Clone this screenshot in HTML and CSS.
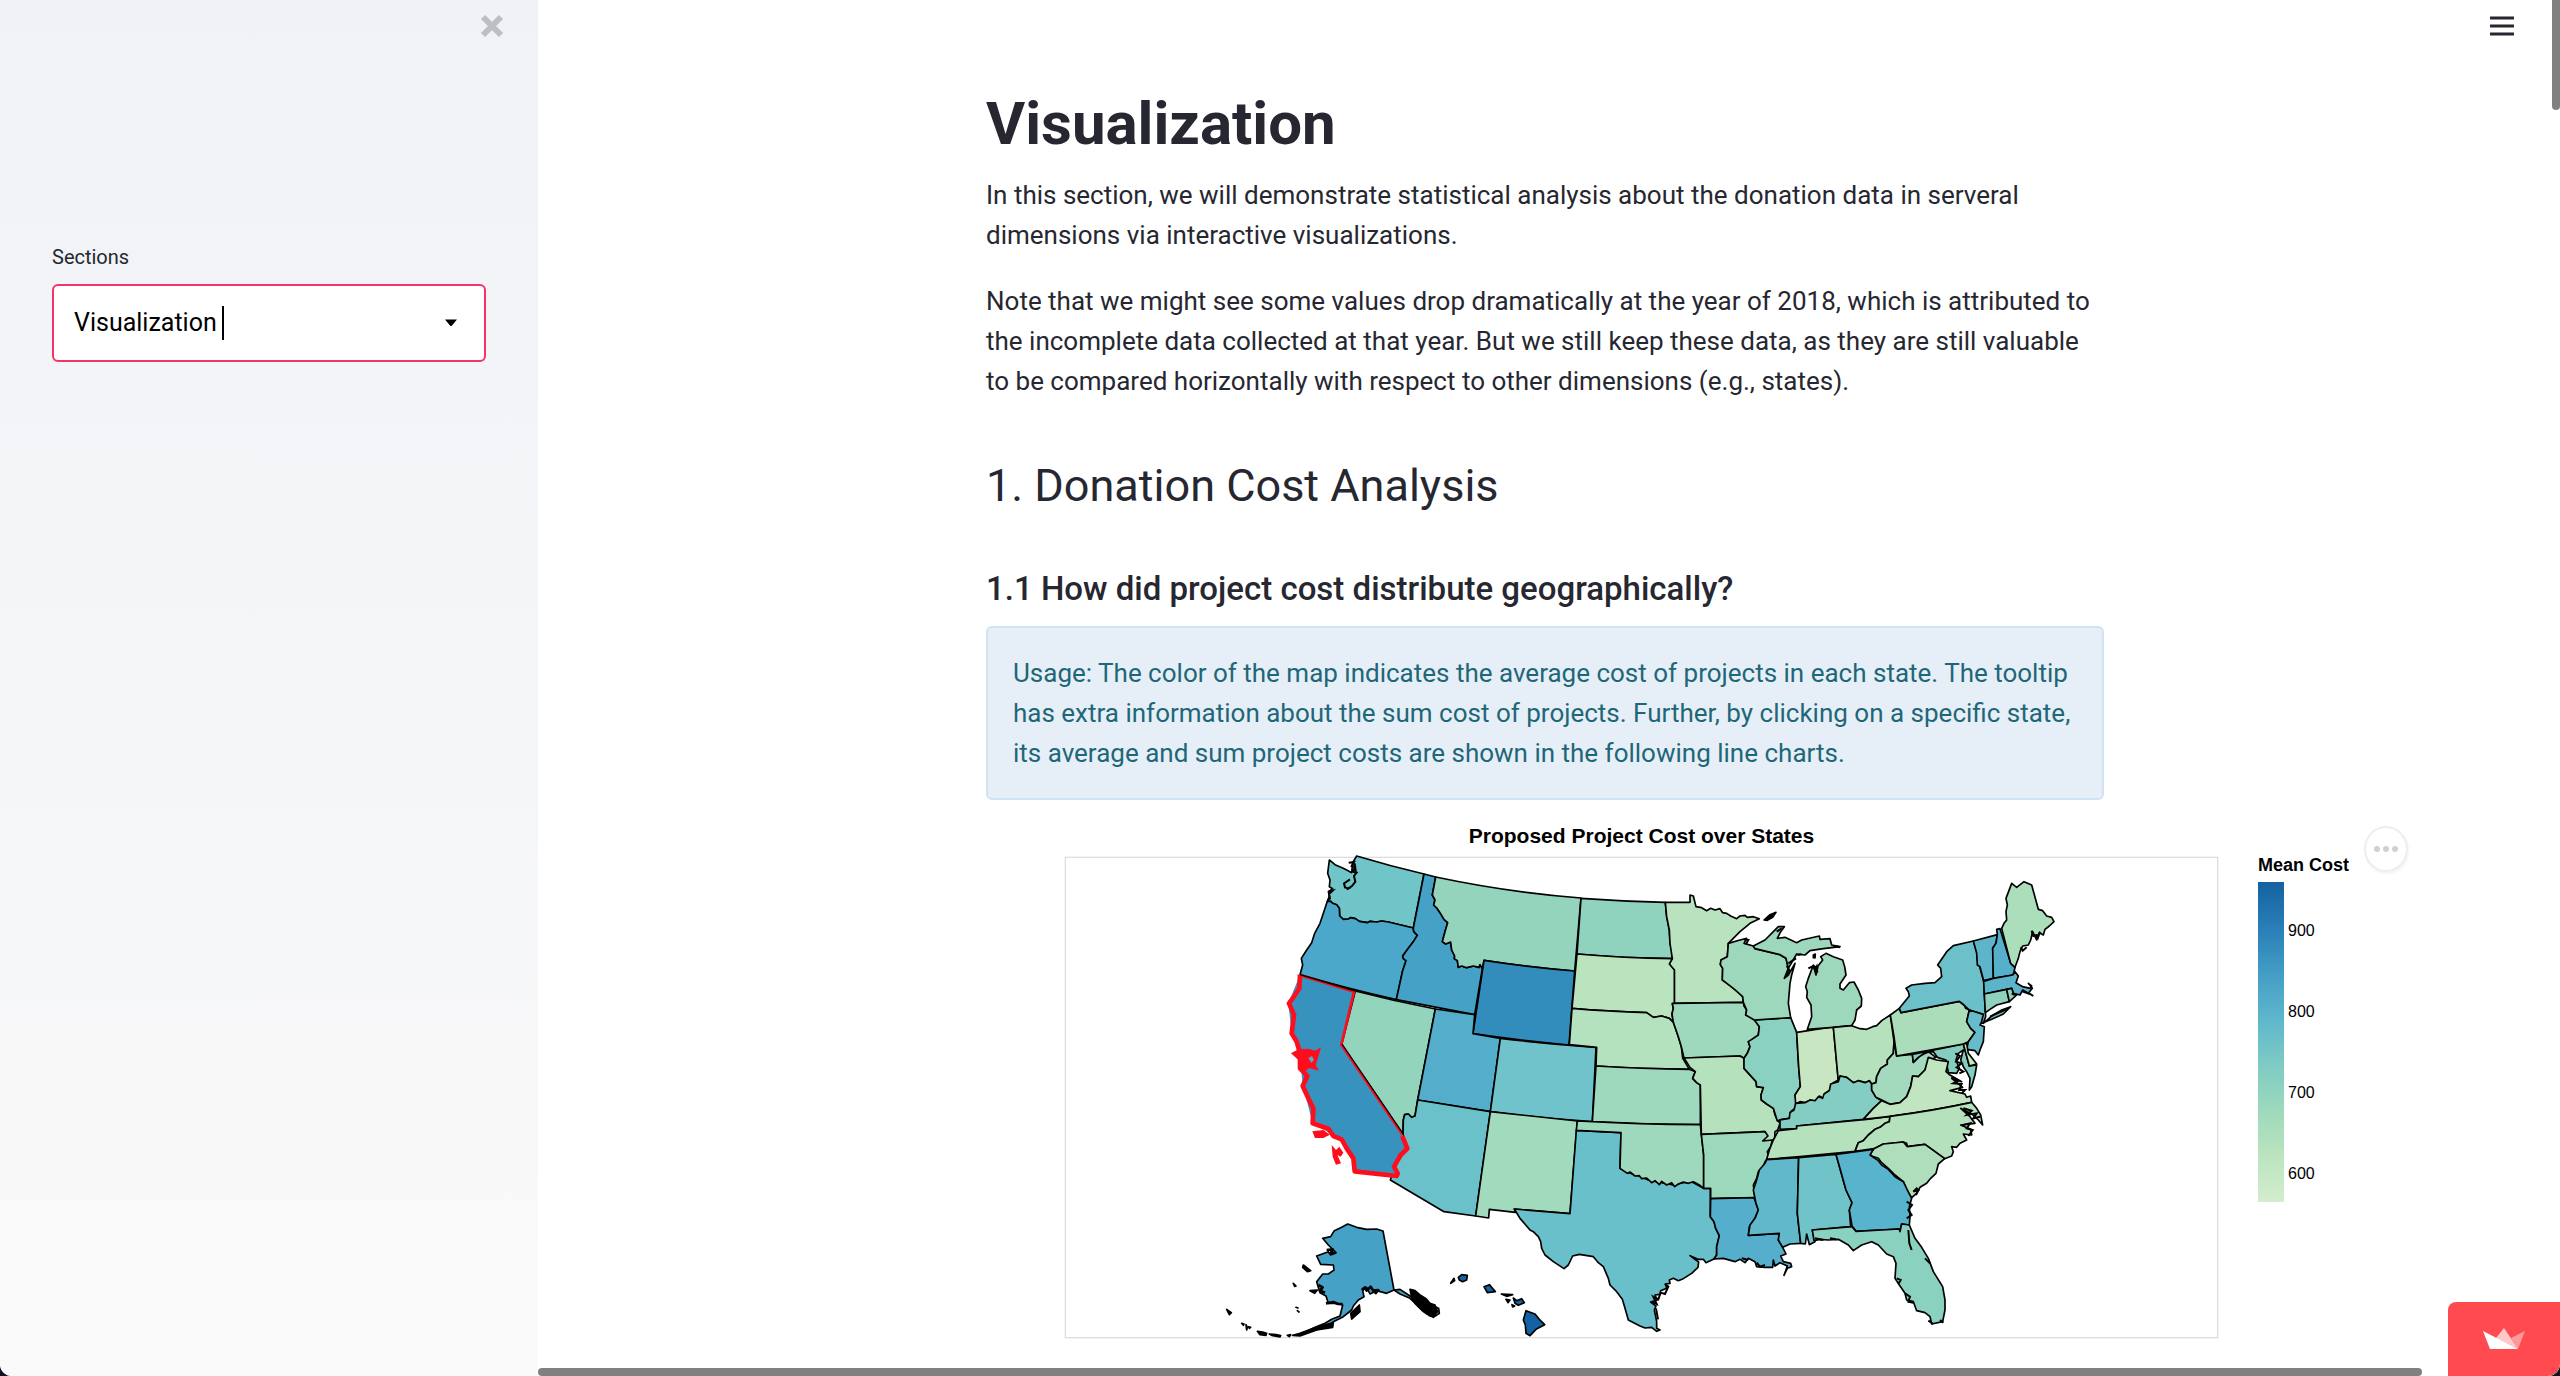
FILE: index.html
```html
<!DOCTYPE html>
<html lang="en">
<head>
<meta charset="utf-8">
<meta name="viewport" content="width=device-width, initial-scale=1">
<title>Visualization</title>
<link rel="stylesheet" href="styles.css">
</head>
<body>
<div class="app">
  <aside class="sidebar">
    <button class="close" type="button" aria-label="Close sidebar">
      <svg viewBox="0 0 24 24" width="24" height="24"><path d="M3 3L21 21M21 3L3 21" fill="none" stroke="#bdbec3" stroke-width="6"/></svg>
    </button>
    <div class="field">
      <label for="section">Sections</label>
      <div class="combo">
        <input id="section" type="text" role="combobox" aria-expanded="false" value="Visualization">
        <span class="caret"></span>
        <svg class="arrow" viewBox="0 0 12 8" width="12" height="8"><path d="M0 0.500H12L7 6.500Q6 7.500 5 6.500Z"/></svg>
      </div>
    </div>
  </aside>

  <main class="main">
    <button class="menu" type="button" aria-label="Menu">
      <svg viewBox="0 0 24 20" width="24" height="20"><path d="M0 2H24M0 10H24M0 18H24" stroke="#262730" stroke-width="3"/></svg>
    </button>
    <article class="content">
      <h1>Visualization</h1>
      <p>In this section, we will demonstrate statistical analysis about the donation data in serveral<br>dimensions via interactive visualizations.</p>
      <p>Note that we might see some values drop dramatically at the year of 2018, which is attributed to<br>the incomplete data collected at that year. But we still keep these data, as they are still valuable<br>to be compared horizontally with respect to other dimensions (e.g., states).</p>
      <h2>1. Donation Cost Analysis</h2>
      <h3>1.1 How did project cost distribute geographically?</h3>
      <div class="info">Usage: The color of the map indicates the average cost of projects in each state. The tooltip<br>has extra information about the sum cost of projects. Further, by clicking on a specific state,<br>its average and sum project costs are shown in the following line charts.</div>

      <figure class="chart">
        <div class="plot">
          <figcaption>Proposed Project Cost over States</figcaption>
          <svg class="map" viewBox="0 0 3459 1443" role="img" aria-label="Mean project cost by state">
            <rect class="frame" x="1" y="1" width="3457" height="1441"/>
            <!-- West -->
            <g class="states" transform="translate(645 -51)">
              <path fill="#70c5c8" d="M148 60L158 68L165 74L188 84L200 90L215 98L218 68L230 48Q330 78 432 102L400 264L325 246L305 243L290 246L270 244L262 248L238 244L226 236L212 233L205 237L190 238L179 228L178 205L170 194L158 190L152 184L142 184L148 168L145 155L158 146L148 140L150 120L143 100Z"/>
              <path fill="#4ba8ca" d="M142 184L152 184L158 190L170 194L178 205L179 228L190 238L205 237L212 233L226 236L238 244L262 248L270 244L290 246L305 243L325 246L400 264L401 274L412 286L402 302L385 325L368 348L370 356L378 362L368 392L349 479Q200 446 60 404L68 375L64 355L80 330L95 308L104 280L120 250L130 220Z"/>
              <path fill="#45a1c6" d="M432 102L467 111L457 165L465 180L461 195L472 206L480 218L492 238L503 248L495 275L487 305L497 312L512 306L515 330L524 348L523 356L532 362L535 382L545 378L560 383L580 378L597 382L600 374L607 386L584 524L349 479L368 392L378 362L370 356L368 348L385 325L402 302L412 286L401 274L400 264Z"/>
              <path fill="#94d4bc" d="M467 111Q690 158 903 174L884 393Q750 382 612 361L607 386L600 374L597 382L580 378L560 383L545 378L535 382L532 362L523 356L524 348L515 330L512 306L497 312L487 305L495 275L503 248L492 238L480 218L472 206L461 195L465 180L457 165Z"/>
              <path fill="#328dbd" d="M612 361Q750 382 884 393L867 615Q720 602 579 581Z"/>
              <path fill="#92d5bc" d="M226 453Q345 484 466 507L413 780L405 828L395 832L385 822L374 824L370 840L369 885L185 614Z"/>
              <path fill="#53adcb" d="M466 507L584 524L579 581L661 595L631 815L413 780Z"/>
              <path fill="#70c3ca" d="M661 595Q800 612 948 622L937 845Q780 836 631 815Z"/>
              <path fill="#6ac1c9" d="M413 780L631 815L587 1128L492 1115L331 1020L335 1008L352 1000L345 975L360 945L382 925L369 885L370 840L374 824L385 822L395 832L405 828Z"/>
              <path fill="#a1dabd" d="M631 815L892 843L870 1121L703 1107L706 1117L628 1108L626 1134L587 1128Z"/>
            </g>
            <!-- Center -->
            <g class="states" transform="translate(1425 9)">
              <path fill="#8fd2be" d="M123 115Q250 124 376 127L380 170L388 210L390 250L397 275L397 296Q250 294 111 282Z"/>
              <path fill="#b9e3be" d="M376 127H450V105L460 108L468 140L485 143L500 152L512 145L525 150L540 146L548 158L560 160L572 168L590 176L600 168L615 166L622 172L640 170L658 176L630 190L600 215L565 250L562 290L543 300L541 314L548 325L547 360L565 368L580 385L600 398L608 410L610 427L403 430V330L390 318L388 310L397 296L390 250L388 210L380 170Z"/>
              <path fill="#b9e4be" d="M111 282Q250 294 397 296L388 312L403 330V430L397 432L400 445L396 462L400 487L388 475L365 468L340 472L320 458Q200 454 96 445Z"/>
              <path fill="#b4e2be" d="M96 445Q200 454 320 458L340 472L365 468L388 475L400 487L415 530L424 560L428 594L448 628Q300 626 168 618L170 562L88 554Z"/>
              <path fill="#9ed9bd" d="M168 618Q300 626 448 628L466 635L458 655L470 668L481 675V794Q320 794 157 785Z"/>
              <path fill="#69bfca" d="M109 811L243 818L240 925L265 938L290 945L325 960L365 968L400 975L430 968L455 965L491 985L511 985V1070L522 1085L527 1105L538 1127L530 1160L530 1185L522 1197L498 1208L490 1198L474 1198L450 1187L476 1206L474 1222L455 1240L430 1256L415 1262L400 1255L388 1260L390 1270L376 1272L380 1285L362 1292L360 1303L345 1305L352 1320L332 1326L348 1338L343 1350L350 1385L350 1405L360 1410L350 1414L335 1402L315 1404L300 1398L265 1380L255 1345L247 1318L230 1295L210 1275L205 1255L190 1220L175 1208L160 1190L118 1183L98 1188L85 1215L72 1226L40 1205L15 1185L5 1165L2 1145L-5 1130L-20 1115L-30 1110L-60 1075L-77 1047L90 1061Z"/>
              <path fill="#9ed9bd" d="M112 783Q300 794 481 794L484 823L491 885V985L478 975L460 965L445 970L430 966L415 972L404 980L395 968L380 975L365 964L358 974L345 962L335 968L320 954L305 956L298 947L285 948L270 936L262 940L240 925L243 818L109 811Z"/>
              <path fill="#9fd9bd" d="M397 430L610 427L612 438L620 450L617 465L630 470L645 480L658 500L655 525L640 540L625 545L630 560L622 580L612 595L600 588L432 594L424 560L415 530L400 487L396 462L400 445Z"/>
              <path fill="#b5e2bd" d="M432 594L600 588L612 595L612 625L630 645L648 665L650 680L670 683L663 705L664 720L680 732L700 745L705 765L712 780L720 790L713 810L705 815L704 835L697 843L668 843L680 828L675 815L484 823L481 675L470 668L458 655L466 635L450 622Z"/>
              <path fill="#9cd8bc" d="M484 823L675 815L684 828L668 843L697 840L692 860L682 875L686 890L675 905L668 925L655 935L650 955L640 975L645 1013L512 1016V985H491V885Z"/>
              <path fill="#8bd1c1" d="M643 480L752 473L770 517L776 620L781 680L765 705L770 725L765 745L752 755L748 775L725 778L712 783L700 745L680 732L664 720L663 705L670 683L650 680L648 665L612 625L612 595L622 580L630 560L625 545L655 525L658 500Z"/>
              <path fill="#c8e6c2" d="M770 517L790 514L880 500L895 660L880 668L870 690L855 700L850 715L838 708L825 725L812 720L795 728L780 725L767 732L765 705L781 680L776 620Z"/>
              <path fill="#9ed8bc" d="M565 250L600 240L620 235L612 250L640 258L645 266L720 284L738 295L745 325L733 355L745 345L765 310L755 345L750 370L745 430L752 473L643 480L617 465L620 450L610 427L608 410L580 385L547 360L548 325L541 314L543 300L562 290Z"/>
              <path fill="#9dd8bc" d="M640 258L675 240L700 215L715 200L733 200L722 215L712 235L735 232L770 248L785 240L838 228L840 238L870 236L875 255L900 260L850 266L810 272L795 285L770 282L745 325L738 295L720 284L645 266Z"/>
              <path fill="#000" d="M672 180L690 164L708 157L698 172L682 181ZM820 285L826 282L825 294L820 293Z"/>
            </g>
            <!-- East -->
            <g class="states" transform="translate(2205 9)">
              <path fill="#9dd8bc" d="M22 508L35 470L33 435L20 412L22 395L17 380L25 355L40 315L48 345L54 318L68 300L62 290L78 280L100 290L128 300L134 320L138 345L120 372L120 385L130 390L148 368L162 366L175 390L185 415L184 438L170 450L165 480L155 497L100 502Z"/>
              <path fill="#b5e1bc" d="M100 502L155 497L180 506L200 508L218 500L230 497L245 482L271 465L282 545L280 580L262 600L262 612L242 625L230 650L228 668L215 672L208 662L195 668L175 662L160 668L140 652L120 648L115 665Z"/>
              <path fill="#84cdc2" d="M-60 808L-10 806V798L190 778L220 745L245 722L228 712L215 690V672L208 662L195 668L175 662L160 668L140 652L120 648L115 665L92 672L88 692L72 702L68 715L55 710L45 722L30 720L15 728L-13 730L-18 750L-30 758L-32 775L-60 780Z"/>
              <path fill="#b5e2bd" d="M-65 812L-10 806V798L200 778L270 769L268 785L255 790L240 802L225 808L205 825L190 842L175 848L165 874L0 890L-100 898L-92 870L-80 840Z"/>
              <path fill="#a3d9bd" d="M282 545L290 588L337 583L340 607L360 588L385 575L408 592L385 602L375 630L355 650L338 648L332 680L320 710L300 728L270 733L250 722L228 712L215 690V672L228 668L230 650L242 625L262 612L262 600L280 580Z"/>
              <path fill="#84cdc0" d="M337 583L490 552L508 618L530 615L525 645L515 680L508 690L510 655L500 635L490 620L482 600L490 570L475 580L468 600L478 625L470 640L445 638L438 600L412 592L400 575L375 578L355 592L340 607Z"/>
              <path fill="#c0e5c0" d="M190 778L220 745L245 722L270 733L300 728L320 710L332 680L338 648L355 650L375 630L385 592L410 600L445 605L438 635L450 645L485 665L455 655L488 682L450 692L495 702L500 712L512 708L515 727Q400 752 270 769Z"/>
              <path fill="#b5e1bd" d="M270 769Q400 752 515 727L530 745L542 765L548 795L535 780L515 762L482 745L510 770L525 790L482 795L512 808L515 825L490 822L500 840L480 850L470 862L455 860L460 875L455 888L434 896L375 853L322 860L320 850L310 846L250 852L222 866L165 874L175 848L190 842L205 825L225 808L240 802L255 790L268 785Z"/>
              <path fill="#aedebc" d="M222 866L250 852L310 846L322 860L375 853L434 896L415 912L408 940L392 955L380 970L360 982L350 1000L335 1013L322 995L310 965L285 945L265 925L245 908L235 895L215 888L210 882Z"/>
              <path fill="#abddbb" d="M271 465L298 445L303 458L478 424L492 435L497 445L508 450L500 485L512 505L525 517L505 545L490 552L290 588L282 530Z"/>
              <path fill="#6bc0c9" d="M298 445L328 408L325 395L318 385L335 375L375 370L405 368L425 350L422 325L413 315L440 275L460 257L520 243L530 270L532 295L551 364L553 402L557 470L550 490L575 468L605 450L632 440L610 462L575 478L540 492L548 463L508 450L492 435L478 424L303 458Z"/>
              <path fill="#5eb5cb" d="M520 243L592 224L588 250L578 265L580 300L580 355L551 362L540 320L532 315L530 280Z"/>
              <path fill="#56b0cc" d="M592 224L590 208L600 206L632 310L645 322L640 345L580 355L578 265L588 250Z"/>
              <path fill="#abdebb" d="M605 205L612 190L620 180L618 155L622 135L618 115L635 70L650 82L672 65L695 75L715 148L728 152L740 168L755 172L762 185L748 198L735 208L730 225L718 218L710 240L698 215L692 240L685 255L668 258L660 275L655 295L645 322L632 310Z"/>
              <path fill="#5cb4cb" d="M551 364L580 355L638 345L645 335L655 348L648 368L668 380L690 385L695 378L685 370L697 385L685 400L668 390L660 405L640 400L635 385L553 402Z"/>
              <path fill="#8fd2be" d="M553 402L620 388L628 425L590 435L570 448L556 458Z"/>
              <path fill="#8fd2be" d="M620 388L635 385L640 400L650 405L628 425Z"/>
              <path fill="#66bccb" d="M508 450L550 463L545 485L540 495L553 500L550 545L540 570L535 585L525 572L500 568L505 545L525 517L512 505L500 485Z"/>
              <path fill="#c8e6c2" d="M490 552L500 550L505 580L530 612L508 618Z"/>
            </g>
            <!-- South -->
            <g class="states" transform="translate(1425 819)">
              <path fill="#55aecc" d="M512 206L642 203L648 220L655 240L645 265L628 290L625 316L718 310L715 330L728 352L738 372L722 378L730 395L752 400L755 410L742 415L732 436L742 408L720 398L705 408L700 390L698 412L675 412L650 410L645 395L625 385L615 398L600 388L585 395L550 385L522 387L530 375L530 350L538 317L527 295L522 275L511 260Z"/>
              <path fill="#62b8cb" d="M680 89L776 83L772 250L782 340L750 342L728 352L715 330L718 310L625 316L630 285L645 265L655 240L648 220L640 180L650 150L658 120L675 100Z"/>
              <path fill="#70c3c8" d="M776 83L888 73L918 180L936 218L928 240L932 290L817 300L825 335L808 344L800 312L796 342L782 340L772 250Z"/>
              <path fill="#58b3cc" d="M888 73L1000 58L990 75L1015 92L1025 105L1045 118L1065 140L1090 155L1102 180L1115 205L1108 230L1110 260L1108 285L1085 282L1080 303L1078 297L948 304L936 288L928 240L936 218L918 180Z"/>
              <path fill="#8ad1c0" d="M817 300L936 290L948 304L1078 297L1080 305L1085 282L1108 285L1125 325L1145 352L1165 385L1180 425L1208 470L1215 510V540L1208 575L1175 582L1170 560L1155 548L1130 542L1120 515L1100 510L1095 490L1078 465L1065 445L1068 400L1060 380L1040 372L1015 345L995 335L965 345L940 362L925 345L895 328L865 330L840 328L822 332Z"/>
            </g>
            <!-- Alaska and Hawaii -->
            <g class="states" transform="translate(405 939)">
              <path fill="#45a1c6" d="M549 183L582 360L560 370L530 362L510 372L500 352L488 362L492 380L475 390L460 408L455 420L430 440L400 455L385 470L335 482L300 495L345 472L375 460L395 448L420 438L428 405L405 400L385 400L378 378L360 368L350 335L368 312L385 312L402 300L400 285L362 283L350 258L385 245L392 255L408 248L385 225L368 205L392 200L403 182L425 172L443 162L470 172L500 178L530 177Z"/>
              <path fill="#45a1c6" d="M582 360L600 358L630 378L655 390L700 408L716 415L718 430L700 442L680 430L655 408L630 385L600 372Z"/>
              <path fill="#000" d="M630 358L645 362L660 375L678 386L690 400L705 405L712 425L700 440L690 438L670 425L645 400L636 388ZM478 405L480 425L455 447L452 430ZM310 285L332 302L322 305L308 292ZM80 418L94 428L88 434ZM125 460L132 462L130 466ZM138 464L142 472L140 480ZM146 470L152 472L148 475ZM172 484L188 486L200 490L198 496L180 494ZM208 492L228 494L242 497L240 501L215 496ZM280 340L288 348L284 349ZM262 496L272 494L268 500ZM278 496L300 490L340 475L400 458L398 472L350 480L300 498ZM330 362L352 360L344 370ZM288 412L294 414ZM292 422L297 426Z"/>
              <path fill="none" stroke-width="8" d="M485 360L495 352L500 362L512 350L520 362L535 360L525 372M380 240L398 238L392 250L408 248M355 345L368 352L360 362L375 368M378 400L400 396L415 402L428 402"/>
              <path fill="#1562a3" d="M775 322L785 314L802 316L800 330L788 335L778 330ZM852 350L868 344L886 365L862 368ZM940 384L950 392L965 386L973 398L955 406L945 400ZM978 422L1005 432L1018 448L1034 464L1008 478L990 497L978 490L976 465L970 450Z"/>
              <path fill="#000" d="M752 340L762 325L764 332ZM904 372L938 374L920 379ZM918 388L930 390L924 398ZM936 404L944 408L938 411Z"/>
            </g>
            <!-- Rugged coastline -->
            <g class="coast">
              <path transform="translate(645 -51)" d="M206 68L222 66L215 78L225 82L218 95L230 98L222 108L226 125L216 138L205 145L195 142L192 130L210 118M224 70L228 100M200 148L212 142M145 155L158 152L147 162L150 175L143 182"/>
              <path transform="translate(2205 9)" d="M466 580L480 588L468 605L485 610L470 622L490 635L478 640M455 650L475 662L460 670L485 672L478 690L495 690L485 700M490 745L515 752L500 765L530 760L520 775L540 770M490 795L510 790L500 805L518 810L505 828M695 212L700 228L710 225L712 238L720 215M662 262L668 272L680 262M668 395L690 402L700 408M570 470L600 456L620 448M340 995L350 985L358 992M40 318L45 330L50 320L52 338M100 258L120 262M635 400L645 405"/>
              <path transform="translate(1425 819)" d="M335 515L350 522L340 500L355 508L362 488L375 492L385 470L375 462M348 535L354 568M650 398L660 410L675 405M605 385L625 390M825 325L850 330M870 325L888 328M1100 215L1116 225L1105 240L1115 255L1100 265M1105 300L1108 340L1115 360M1070 445L1082 450L1075 462M1155 385L1170 400M1095 490L1110 500L1105 515L1120 518M1165 572L1180 582M1200 570L1210 578M1120 185L1135 180L1128 195"/>
              <path transform="translate(1425 9)" d="M612 238L625 240L618 252M710 215L725 205M740 318L748 330L738 350M772 285L785 283M805 325L820 318L832 322M745 310L768 295"/>
            </g>
            <!-- Selected state -->
            <g transform="translate(645 -51)">
              <path fill="#3892be" d="M60 404L226 453L185 614L369 885L382 925L345 975L350 1005L222 995L220 960L178 895L98 850L68 735L60 655L35 580L25 490Z"/>
              <path class="picked" d="M60 404L58 445L45 465L27 490L42 525L35 580L50 605L60 640L60 685L82 708L68 738L85 775L100 805L98 850L145 866L160 888L185 898L200 925L220 955L224 994L350 1008L353 1000L342 980L362 945L382 926L367 888"/>
              <path class="picked-border" d="M60 406L222 455L184 614L368 885"/>
              <path class="picked-edge" d="M60 404L226 453M186 612L371 884"/>
              <path fill="#ff0d1d" d="M55 628L85 626L105 632L123 622L115 650L107 675L117 692L88 684L68 700L55 660L33 640ZM97 874L130 870L150 884L130 894L105 894ZM155 915L168 930L178 920L190 938L182 950L172 945L183 970L168 974L158 950Z"/>
              <path fill="#5ba8ca" d="M85 655L96 648L102 660L94 668Z"/>
            </g>
          </svg>
        </div>
        <div class="legend">
          <div class="legend-title">Mean Cost</div>
          <div class="scale">
            <div class="ramp"></div>
            <div class="ticks"><span>900</span><span>800</span><span>700</span><span>600</span></div>
          </div>
        </div>
        <button class="actions" type="button" aria-label="Chart actions"><i></i><i></i><i></i></button>
      </figure>
    </article>
    <div class="thumb-x"></div>
  </main>
  <div class="thumb-y"></div>
  <a class="badge" href="#" aria-label="Hosted app">
    <svg viewBox="0 0 42 22" width="42" height="22"><path fill="#ff9999" d="M42 3L28 10L35 21Z"/><path fill="#ffc9cb" d="M21 0L13 10L35 21Z"/><path fill="#fff" d="M0 3L35 21H7Z"/></svg>
  </a>
</div>
</body>
</html>
```
FILE: styles.css
```css
* { box-sizing: border-box; }

body {
  margin: 0;
  background: #10141f;
  color: #262730;
  font-family: Roboto, "Liberation Sans", sans-serif;
  font-size: 26px;
  line-height: 40px;
}

button { border: 0; padding: 0; background: none; }
svg { display: block; }

.app {
  position: relative;
  display: flex;
  height: 100vh;
  overflow: hidden;
  border-radius: 0 0 12px 12px;
  background: #fff;
}

/* Sidebar */
.sidebar {
  flex: 0 0 538px;
  display: flex;
  flex-direction: column;
  padding: 14px 52px 0;
  background: linear-gradient(#f0f2f6, #fafafa);
}

.close { align-self: flex-end; margin-right: -18px; }
.field { padding-top: 205px; }
.field label { display: block; font-size: 20px; line-height: 28px; margin-bottom: 13px; }

.combo {
  display: flex;
  align-items: center;
  height: 78px;
  padding: 0 27px 0 20px;
  border: 2px solid #f63366;
  border-radius: 6px;
  background: #fff;
}

.combo input {
  width: 148px;
  padding: 0;
  border: 0;
  outline: 0;
  background: none;
  color: #000;
  font: inherit;
  font-size: 25px;
}

.caret { width: 2px; height: 34px; background: #000; }
.arrow { margin-left: auto; }

/* Page */
.main {
  position: relative;
  flex: 1;
  min-width: 0;
  padding: 90px 8px 0 0;
  overflow: hidden;
}

.menu { position: absolute; top: 16px; right: 46px; }
.content { max-width: 1118px; margin: 0 auto; }

h1 { margin: 0 0 17px; font-size: 60px; line-height: 68px; font-weight: 700; }
h2 { margin: 57px 0 55px; font-size: 45px; line-height: 56px; font-weight: 400; }
h3 { margin: 0 0 17px; font-size: 33px; line-height: 40px; font-weight: 500; }
p { margin: 0 0 26px; white-space: nowrap; }

.info {
  padding: 25px;
  border: 2px solid #d0e2f4;
  border-radius: 6px;
  background: #e6eff8;
  color: #1f6777;
  white-space: nowrap;
}

/* Chart */
.chart {
  position: relative;
  display: flex;
  gap: 40px;
  width: 1434px;
  margin: 0;
  padding: 16px 0 0 79px;
  font-family: "Liberation Sans", Arial, sans-serif;
  color: #000;
}

.plot { flex: 0 0 1153px; }
.plot figcaption { height: 41px; text-align: center; font-size: 21px; font-weight: 700; }
.map { width: 100%; overflow: visible; }
.frame { fill: #fff; stroke: #ddd; stroke-width: 4; }
.states { stroke: #000; stroke-width: 5; stroke-linejoin: round; }
.coast { fill: none; stroke: #000; stroke-width: 6; }
.picked { fill: none; stroke: #ff0d1d; stroke-width: 14; stroke-linejoin: round; }
.picked-border { fill: none; stroke: #ff0d1d; stroke-width: 8; }
.picked-edge { fill: none; stroke: #000; stroke-width: 4; }

.legend { padding-top: 36px; }
.legend-title { margin-bottom: 4px; font-size: 18px; line-height: 26px; font-weight: 700; }
.scale { display: flex; gap: 4px; height: 320px; }
.ramp {
  width: 26px;
  background: linear-gradient(#1562a2, #2a80b8 15%, #46a0c6 30%, #5eb7cb 43%, #7ac8c6 55%, #9ad8bc 70%, #b8e3bd 84%, #d3edcf);
}
.ticks { display: flex; flex-direction: column; gap: 57px; padding-top: 37px; font-size: 16px; line-height: 24px; }

.actions {
  position: absolute;
  top: 26px;
  right: 12px;
  display: flex;
  align-items: center;
  justify-content: center;
  gap: 3px;
  width: 44px;
  height: 46px;
  border: 2px solid #eee;
  border-radius: 50%;
  background: #fff;
  box-shadow: 1px 2px 3px #f3f3f3;
}
.actions i { width: 6px; height: 6px; border-radius: 50%; background: #ced1d1; }

/* Overlays at the window edges */
.thumb-x {
  position: absolute;
  left: 0;
  right: 138px;
  bottom: 0;
  height: 8px;
  border-radius: 4px;
  background: #808080;
}
.thumb-y {
  position: absolute;
  top: 0;
  right: 0;
  width: 8px;
  height: 110px;
  border-radius: 0 0 4px 4px;
  background: #808080;
}
.badge {
  position: absolute;
  right: 0;
  bottom: 0;
  display: flex;
  align-items: center;
  justify-content: center;
  width: 112px;
  height: 74px;
  border-radius: 8px 0 12px;
  background: #ff4b4f;
}
```
